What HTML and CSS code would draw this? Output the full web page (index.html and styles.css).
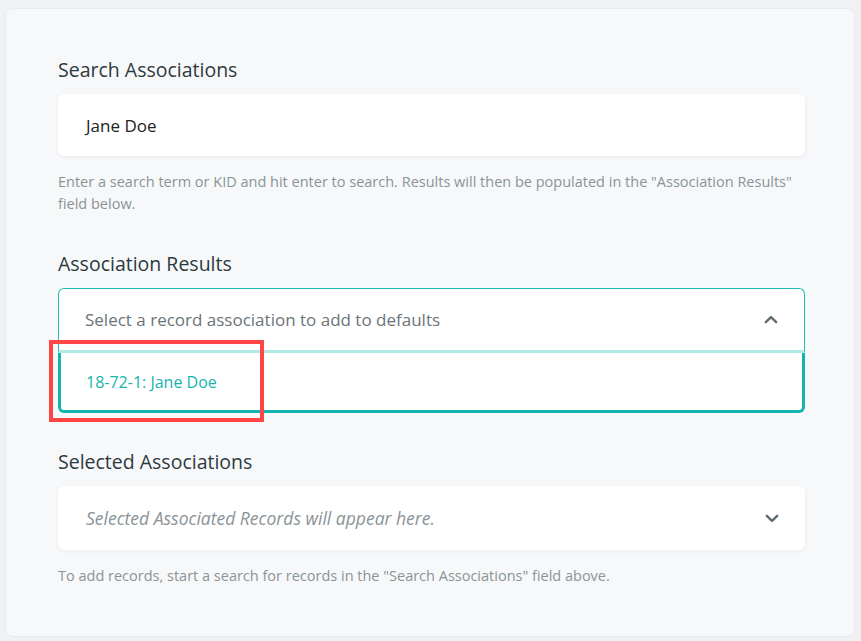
FILE: index.html
```html
<!DOCTYPE html>
<html>
<head>
<meta charset="utf-8">
<link rel="stylesheet" href="styles.css">
</head>
<body>
<div class="page">
  <div class="card">
    <div class="field">
      <div class="label">Search Associations</div>
      <div class="box input">Jane Doe</div>
      <div class="help">Enter a search term or KID and hit enter to search. Results will then be populated in the "Association Results" field below.</div>
    </div>
    <div class="field">
      <div class="label">Association Results</div>
      <div class="dropdown">
        <div class="dd-head">
          <span class="placeholder">Select a record association to add to defaults</span>
          <svg class="chev" width="14" height="9" viewBox="0 0 14 9"><path d="M1.8 7.2 L7 2.2 L12.2 7.2" fill="none" stroke="#5f6b71" stroke-width="2.4" stroke-linecap="round" stroke-linejoin="round"/></svg>
        </div>
        <div class="dd-list">
          <div class="option">18-72-1: Jane Doe</div>
          <div class="highlight"></div>
        </div>
      </div>
    </div>
    <div class="field">
      <div class="label">Selected Associations</div>
      <div class="box selected">
        <span class="italic">Selected Associated Records will appear here.</span>
        <svg class="chev" width="14" height="9" viewBox="0 0 14 9"><path d="M1.8 1.8 L7 6.8 L12.2 1.8" fill="none" stroke="#5f6b71" stroke-width="2.4" stroke-linecap="round" stroke-linejoin="round"/></svg>
      </div>
      <div class="help">To add records, start a search for records in the "Search Associations" field above.</div>
    </div>
  </div>
</div>
</body>
</html>
```

FILE: styles.css
```css
* { box-sizing: border-box; }
html, body { margin: 0; padding: 0; }
body {
  background: #f0f1f3;
  font-family: "Open Sans", "Lato", sans-serif;
  width: 861px;
  height: 641px;
  overflow: hidden;
}
.page {
  padding: 8px 6px 4px 5px;
}
.card {
  height: 629px;
  background: #f7f8fa;
  border: 1px solid #e8eaed;
  border-radius: 8px;
  padding: 49px 49px 0 52px;
  display: flex;
  flex-direction: column;
  gap: 37px;
}
.field {
  display: flex;
  flex-direction: column;
}
.label {
  font-size: 19.5px;
  line-height: 24px;
  color: #2c3a40;
  margin-bottom: 12px;
}
.box {
  background: #fff;
  border-radius: 6px;
  box-shadow: 0 1px 4px rgba(30, 40, 60, 0.06);
  display: flex;
  align-items: center;
}
.input {
  height: 62px;
  padding-left: 28px;
  font-size: 17px;
  color: #222;
}
.help {
  margin-top: 15px;
  font-size: 14.5px;
  line-height: 22px;
  color: #8a9497;
}
.dropdown {
  display: flex;
  flex-direction: column;
}
.dd-head {
  height: 65px;
  background: #fff;
  border: 1px solid #1dbcb5;
  border-bottom: 3px solid #b2e9e5;
  border-radius: 6px 6px 0 0;
  display: flex;
  align-items: center;
  justify-content: space-between;
  padding: 0 26px 0 26px;
}
.placeholder {
  font-size: 17px;
  color: #6b7479;
}
.dd-list {
  position: relative;
  height: 60px;
  background: #fff;
  border: 3px solid #12b6ae;
  border-top: none;
  border-radius: 0 0 6px 6px;
  display: flex;
  align-items: center;
  padding-left: 25px;
  padding-bottom: 0;
}
.option {
  font-size: 16px;
  color: #18b4ad;
}
.highlight {
  position: absolute;
  left: -12px;
  top: -13px;
  width: 215px;
  height: 82px;
  border: 4px solid #ff4545;
}
.selected {
  height: 64px;
  padding: 0 26px 0 28px;
  justify-content: space-between;
}
.italic {
  font-style: italic;
  font-size: 17.5px;
  color: #8a9397;
}
.chev { display: block; }
```
